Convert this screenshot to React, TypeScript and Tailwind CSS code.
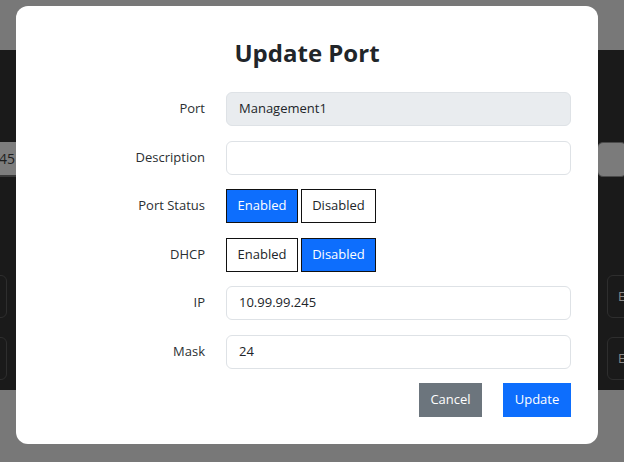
import React from "react";

const font = { fontFamily: '"Open Sans", "Noto Sans", sans-serif' };

function Toggle({ active, label, w }: { active: boolean; label: string; w: string }) {
  return (
    <div
      className={
        "h-[34px] flex items-center justify-center border border-[#111] text-[13px] " +
        w +
        " " +
        (active ? "bg-[#0d6efd] text-white" : "bg-white text-[#212529]")
      }
    >
      {label}
    </div>
  );
}

function Row({ label, children }: { label: string; children: React.ReactNode }) {
  return (
    <div className="flex items-center">
      <div className="w-[194px] pr-[21px] text-right text-[13px] text-[#2b2f33]">{label}</div>
      <div className="flex-1 flex">{children}</div>
    </div>
  );
}

function Input({ value, disabled }: { value: string; disabled?: boolean }) {
  return (
    <div
      className={
        "h-[34px] w-full rounded-[6px] border border-[#dee2e6] px-[12px] flex items-center text-[13px] text-[#212529] " +
        (disabled ? "bg-[#e9ecef]" : "bg-white")
      }
    >
      {value}
    </div>
  );
}

export default function App() {
  return (
    <div className="relative w-[624px] h-[462px] overflow-hidden bg-[#787878]" style={font}>
      <div className="h-[50px] bg-[#787878]" />
      <div className="h-[340px] bg-[#1a1a1a] flex flex-col">
        <div className="mt-[92px] flex justify-between">
          <div className="h-[35px] w-[40px] -ml-[24px] bg-[#7d7d7d] border-b-2 border-[#3a3a3a] flex items-center justify-end pr-[1px] text-[14px] text-[#1e1e1e]">
            45
          </div>
          <div className="h-[35px] w-[30px] -mr-[3px] bg-[#7b7b7b] border border-[#4a4a4a] rounded-[6px]" />
        </div>
        <div className="mt-[98px] flex justify-between">
          <div className="h-[43px] w-[20px] -ml-[13px] rounded-[6px] border border-[#2e2e2e]" />
          <div className="h-[43px] w-[30px] -mr-[13px] rounded-[6px] border border-[#2e2e2e] flex items-center pl-[10px] text-[13px] text-[#8a8a8a]">
            E
          </div>
        </div>
        <div className="mt-[19px] flex justify-between">
          <div className="h-[43px] w-[20px] -ml-[13px] rounded-[6px] border border-[#2e2e2e]" />
          <div className="h-[43px] w-[30px] -mr-[13px] rounded-[6px] border border-[#2e2e2e] flex items-center pl-[10px] text-[13px] text-[#8a8a8a]">
            E
          </div>
        </div>
      </div>
      <div className="h-[72px] bg-[#787878]" />

      <div className="absolute left-[16px] top-[6px] w-[582px] h-[438px] bg-white rounded-[12px] pt-[32px] pl-[16px] pr-[27px]">
        <div className="text-center text-[24px] leading-[29px] font-bold text-[#212529] pl-[11px]">Update Port</div>
        <div className="mt-[25px] flex flex-col gap-[14.5px]">
          <Row label="Port">
            <Input value="Management1" disabled />
          </Row>
          <Row label="Description">
            <Input value="" />
          </Row>
          <Row label="Port Status">
            <div className="flex gap-[3px]">
              <Toggle active label="Enabled" w="w-[72px]" />
              <Toggle active={false} label="Disabled" w="w-[75px]" />
            </div>
          </Row>
          <Row label="DHCP">
            <div className="flex gap-[3px]">
              <Toggle active={false} label="Enabled" w="w-[72px]" />
              <Toggle active label="Disabled" w="w-[75px]" />
            </div>
          </Row>
          <Row label="IP">
            <Input value="10.99.99.245" />
          </Row>
          <Row label="Mask">
            <Input value="24" />
          </Row>
          <div className="flex justify-end gap-[21px]">
            <div className="h-[34px] w-[63px] bg-[#6c757d] text-white text-[13px] flex items-center justify-center">
              Cancel
            </div>
            <div className="h-[34px] w-[68px] bg-[#0d6efd] text-white text-[13px] flex items-center justify-center">
              Update
            </div>
          </div>
        </div>
      </div>
    </div>
  );
}
